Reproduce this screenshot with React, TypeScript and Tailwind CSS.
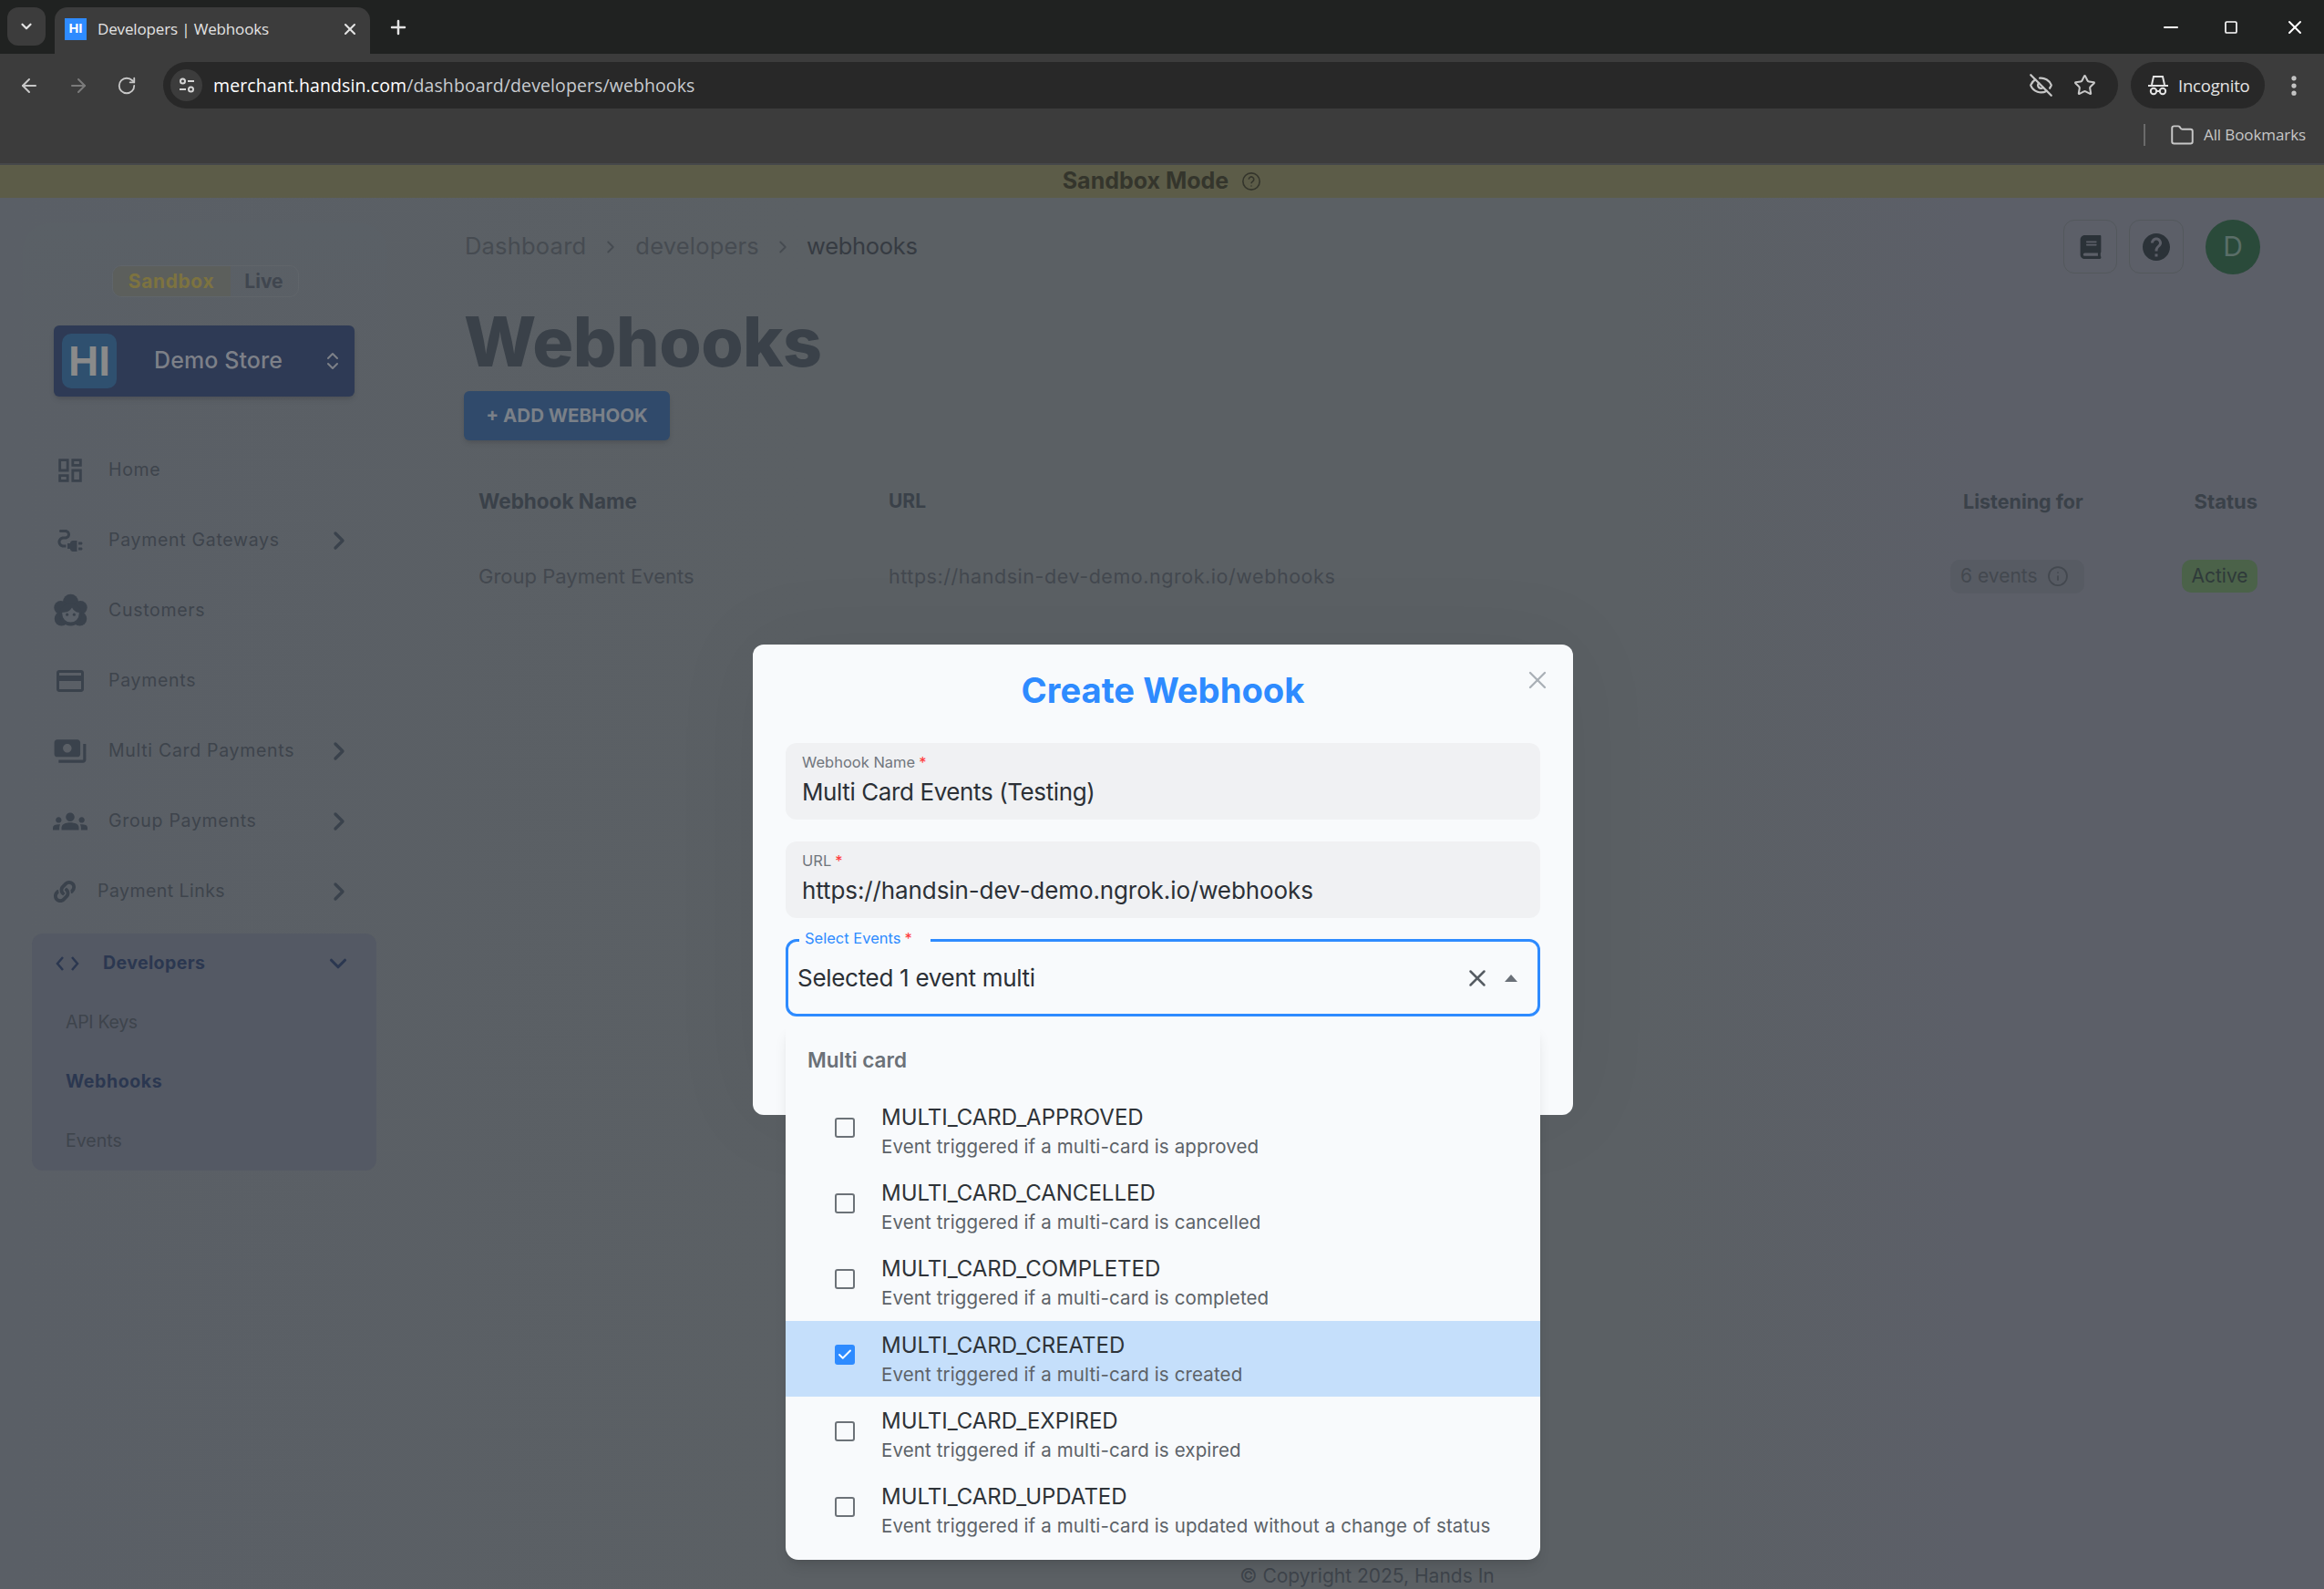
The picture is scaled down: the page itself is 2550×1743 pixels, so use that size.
import { ArrowLeft, ArrowRight, Check, ChevronDown, ChevronRight, ChevronsUpDown, EllipsisVertical, EyeOff, Folder, Info, Minus, Plus, RotateCw, Square, Star, X } from "lucide-react"
import { FaBook, FaLink } from "react-icons/fa"
import { MdElectricalServices, MdGroups, MdHelp, MdOutlineCreditCard, MdOutlineDashboard, MdPayments } from "react-icons/md"

function CustomerFace({ size, className }: { size: number; className?: string }) {
  return (
    <svg width={size} height={size} viewBox="0 0 24 24" className={className}>
      <g fill="currentColor">
        <circle cx="12" cy="6" r="5.5" />
        <circle cx="5" cy="10" r="4.8" />
        <circle cx="19" cy="10" r="4.8" />
        <circle cx="5.5" cy="18" r="5" />
        <circle cx="18.5" cy="18" r="5" />
        <circle cx="12" cy="15" r="8" />
      </g>
      <path d="M6 13.5c3 0 5.5-1 7-3.5 1 2 3 3.5 5 3.5v1a6 6 0 0 1-12 0z" fill="#5a6068" />
      <circle cx="9.5" cy="15" r="1" fill="currentColor" />
      <circle cx="14.5" cy="15" r="1" fill="currentColor" />
    </svg>
  )
}

const navigation = [
  { name: "Home", icon: MdOutlineDashboard, size: 34 },
  { name: "Payment Gateways", icon: MdElectricalServices, size: 36, arrow: true },
  { name: "Customers", icon: CustomerFace, size: 37 },
  { name: "Payments", icon: MdOutlineCreditCard, size: 36 },
  { name: "Multi Card Payments", icon: MdPayments, size: 38, arrow: true },
  { name: "Group Payments", icon: MdGroups, size: 38, arrow: true },
]

const events = [
  { name: "MULTI_CARD_APPROVED", desc: "Event triggered if a multi-card is approved" },
  { name: "MULTI_CARD_CANCELLED", desc: "Event triggered if a multi-card is cancelled" },
  { name: "MULTI_CARD_COMPLETED", desc: "Event triggered if a multi-card is completed" },
  { name: "MULTI_CARD_CREATED", desc: "Event triggered if a multi-card is created", selected: true },
  { name: "MULTI_CARD_EXPIRED", desc: "Event triggered if a multi-card is expired" },
  { name: "MULTI_CARD_UPDATED", desc: "Event triggered if a multi-card is updated without a change of status" },
]

function BrowserChrome() {
  return (
    <div className="font-['Open_Sans',sans-serif] text-[#e3e3e3]">
      {/* Tab strip */}
      <div className="h-[59px] bg-[#202221] flex items-end pl-[8px]">
        <div className="w-[42px] h-[42px] mb-[9px] rounded-[12px] bg-[#3c3c3c] flex items-center justify-center">
          <ChevronDown className="w-[18px] h-[18px]" strokeWidth={3} />
        </div>
        <div className="w-[346px] h-[51px] ml-[10px] rounded-t-[14px] bg-[#3c3c3c] flex items-center pl-[11px] pb-[4px]">
          <div className="w-[24px] h-[24px] bg-[#2e8bff] flex items-center justify-center text-white text-[15px] font-bold font-['Liberation_Sans',sans-serif]">HI</div>
          <span className="ml-[12px] text-[17px] tracking-[-0.15px] flex-1">Developers | Webhooks</span>
          <X className="w-[20px] h-[20px] mr-[12px]" strokeWidth={2.5} />
        </div>
        <Plus className="w-[24px] h-[24px] ml-[19px] mb-[17px]" strokeWidth={2.5} />
        <div className="flex-1" />
        <div className="flex items-center h-full text-white">
          <Minus className="w-[24px] h-[24px] mr-[46px]" strokeWidth={2} />
          <Square className="w-[16px] h-[18px] mr-[50px]" strokeWidth={2.5} />
          <X className="w-[24px] h-[24px] mr-[20px]" strokeWidth={2} />
        </div>
      </div>

      {/* Toolbar */}
      <div className="h-[122px] bg-[#3c3c3c] border-b-[2px] border-[#46484a]">
        <div className="h-[60px] pt-[9px] flex items-start">
          <div className="w-[179px] h-[51px] flex items-center pl-[20px] gap-[30px]">
            <ArrowLeft className="w-[24px] h-[24px] text-[#c7c7c7]" strokeWidth={2} />
            <ArrowRight className="w-[24px] h-[24px] text-[#7b7b7b]" strokeWidth={2} />
            <RotateCw className="w-[22px] h-[22px] text-[#c7c7c7]" strokeWidth={2} />
          </div>
          <div className="w-[2145px] h-[51px] rounded-full bg-[#282828] flex items-center pl-[8px] pr-[24px]">
            <div className="w-[35px] h-[35px] rounded-full bg-[#3c3c3c] flex items-center justify-center">
              <svg width="20" height="20" viewBox="0 0 20 20" fill="none" stroke="#d5d5d5" strokeWidth="2">
                <circle cx="5.5" cy="5" r="2.5" />
                <path d="M11 5h7M2 14h7" />
                <circle cx="14.5" cy="14" r="2.5" />
              </svg>
            </div>
            <span className="ml-[12px] text-[19.5px] tracking-[0.1px] text-[#c8ccd0] flex-1">
              <span className="text-white">merchant.handsin.com</span>/dashboard/developers/webhooks
            </span>
            <EyeOff className="w-[27px] h-[27px] text-[#c7c7c7] mr-[22px]" strokeWidth={2} />
            <Star className="w-[25px] h-[25px] text-[#c7c7c7]" strokeWidth={2} />
          </div>
          <div className="ml-[14px] w-[147px] h-[51px] rounded-full bg-[#282828] flex items-center pl-[18px]">
            <svg width="24" height="24" viewBox="0 0 24 24" fill="none" stroke="#e3e3e3" strokeWidth="2">
              <path d="M1 12h22M5 11l2-9h10l2 9" />
              <circle cx="7" cy="18" r="3.2" />
              <circle cx="17" cy="18" r="3.2" />
              <path d="M10 18h4" />
            </svg>
            <span className="ml-[10px] text-[18.5px] tracking-[-0.2px]">Incognito</span>
          </div>
          <div className="ml-[18px] h-[51px] flex items-center">
            <EllipsisVertical className="w-[28px] h-[28px] text-[#c7c7c7]" strokeWidth={2.5} />
          </div>
        </div>
        {/* Bookmarks */}
        <div className="h-[58px] flex items-center justify-end pr-[20px] text-[#c7c7c7]">
          <div className="w-[2px] h-[24px] bg-[#6a6a6a] mr-[27px]" />
          <Folder className="w-[27px] h-[27px] mr-[10px]" strokeWidth={1.75} />
          <span className="text-[17px] tracking-[-0.1px]">All Bookmarks</span>
        </div>
      </div>
    </div>
  )
}

function Sidebar() {
  return (
    <aside className="w-[450px] shrink-0 pl-[25px] text-[#3e444c]">
      <div className="w-[400px] mt-[28px] pt-[46px] rounded-t-[30px] bg-gradient-to-b from-[#5a6066] to-[#5a6066]/0">
        <div className="mx-auto w-[205px] h-[35px] flex rounded-[10px] border border-[#60656a] text-[21px] font-bold overflow-hidden">
          <div className="w-[129px] bg-[#5c5f5c] text-[#7d7340] flex items-center justify-center tracking-[0.6px]">Sandbox</div>
          <div className="flex-1 text-[#40464f] flex items-center justify-center">Live</div>
        </div>
        <div className="ml-[34px] mr-[36px] mt-[31px] h-[78px] rounded-[6px] bg-[#2e3a55] shadow-md flex items-center pl-[9px]">
          <div className="w-[60px] h-[60px] rounded-[10px] bg-[#2f506f] text-[#8a8a8a] text-[46px] font-black flex items-center justify-center font-['Liberation_Sans',sans-serif]">HI</div>
          <span className="ml-[41px] text-[25px] font-medium text-[#7d8088] tracking-[0.1px]">Demo Store</span>
          <ChevronsUpDown className="w-[24px] h-[28px] ml-[43px] text-[#7d8088]" strokeWidth={2} />
        </div>
      </div>

      <nav className="mt-[42px]">
        {navigation.map((item) => (
          <div key={item.name} className="h-[77px] flex items-center">
            <div className="w-[94px] flex justify-center pl-[10px]">
              <item.icon size={item.size} className="text-[#3a424c]" />
            </div>
            <span className="text-[19.5px] tracking-[0.7px]">{item.name}</span>
            {item.arrow && <ChevronRight className="w-[32px] h-[32px] ml-auto mr-[62px] text-[#3a424c]" strokeWidth={2.5} />}
          </div>
        ))}
        <div className="h-[77px] flex items-center">
          <div className="w-[82px] flex justify-start pl-[34px]">
            <FaLink size={24} className="text-[#3a424c]" />
          </div>
          <span className="text-[19.5px] tracking-[0.45px]">Payment Links</span>
          <ChevronRight className="w-[32px] h-[32px] ml-auto mr-[62px] text-[#3a424c]" strokeWidth={2.5} />
        </div>
      </nav>

      {/* Developers group */}
      <div className="ml-[10px] w-[378px] h-[260px] mt-[8px] rounded-[12px] bg-[#545964]">
        <div className="h-[65px] flex items-center pl-[26px]">
          <svg width="26" height="18" viewBox="0 0 26 18" fill="none" stroke="#2b3750" strokeWidth="2.5">
            <path d="M8 2 2 9l6 7M18 2l6 7-6 7" />
          </svg>
          <span className="ml-[26px] text-[19.5px] font-bold tracking-[0.4px] text-[#2b3750]">Developers</span>
          <ChevronDown className="w-[30px] h-[30px] ml-auto mr-[27px] text-[#2b3750]" strokeWidth={2.5} />
        </div>
        <div className="h-[65px] flex items-center pl-[37px] text-[19.5px] tracking-[-0.3px]">API Keys</div>
        <div className="h-[65px] flex items-center pl-[37px] text-[19.5px] font-bold tracking-[0.6px] text-[#2b3750]">Webhooks</div>
        <div className="h-[65px] flex items-center pl-[37px] text-[19.5px]">Events</div>
      </div>
    </aside>
  )
}

function MainContent() {
  return (
    <main className="flex-1 flex flex-col pl-[59px] pr-[73px] text-[#3a4149]">
      <div className="mt-[24px] h-[59px] flex items-center">
        <div className="flex items-center text-[25.5px] text-[#464b51] flex-1 tracking-[0.2px] pl-[1px]">
          <span>Dashboard</span>
          <ChevronRight className="w-[22px] h-[22px] mx-[16px]" strokeWidth={2} />
          <span>developers</span>
          <ChevronRight className="w-[22px] h-[22px] mx-[15px]" strokeWidth={2} />
          <span className="text-[#363b42] tracking-[-0.3px]">webhooks</span>
        </div>
        <div className="w-[59px] h-[59px] rounded-[12px] border border-[#53585c] flex items-center justify-center -mr-[3px]">
          <FaBook size={26} className="text-[#2b3238]" />
        </div>
        <div className="w-[60px] h-[59px] ml-[16px] rounded-[12px] border border-[#53585c] flex items-center justify-center -mr-[3px]">
          <MdHelp size={36} className="text-[#2b3238]" />
        </div>
        <div className="w-[60px] h-[60px] ml-[27px] -mr-[3px] rounded-full bg-[#2a4a3a] text-[#5a6e68] text-[30px] flex items-center justify-center">D</div>
      </div>

      <h1 className="mt-[35px] text-[75px] leading-[80px] font-extrabold tracking-[-0.5px]">Webhooks</h1>

      <div className="mt-[14px] w-[226px] h-[54px] rounded-[6px] bg-[#304a6b] shadow-md flex items-center justify-center text-[20.5px] font-bold text-[#7a8088]">
        + ADD WEBHOOK
      </div>

      <div className="mt-[36px] flex items-center h-[62px] pl-[16px] text-[21px] font-bold">
        <div className="w-[450px] text-[22.5px]">Webhook Name</div>
        <div className="flex-1">URL</div>
        <div className="w-[253px] text-[21.5px]">Listening for</div>
        <div className="w-[70px] text-right text-[22px]">Status</div>
      </div>
      <div className="mt-[30px] flex items-center h-[42px] pl-[16px] text-[22px] text-[#43484f]">
        <div className="w-[450px]">Group Payment Events</div>
        <div className="flex-1 text-[21.5px] tracking-[0.55px]">https://handsin-dev-demo.ngrok.io/webhooks</div>
        <div className="w-[253px]">
          <span className="inline-flex items-center h-[37px] w-[147px] -ml-[14px] pl-[11px] rounded-[10px] bg-[#575b63] text-[21px]">
            6 events
            <Info className="w-[24px] h-[24px] ml-[10px]" strokeWidth={1.75} />
          </span>
        </div>
        <div className="w-[70px] flex justify-end">
          <span className="shrink-0 h-[36px] w-[83px] rounded-[10px] bg-[#4b6249] text-[#2f3a3a] text-[21px] flex items-center justify-center">Active</span>
        </div>
      </div>

      <div className="mt-auto mb-[-1px] pl-[14px] text-center text-[21px] text-[#3e444b]">© Copyright 2025, Hands In</div>
    </main>
  )
}

function Field({ label, value, className, valueClassName }: { label: string; value: string; className?: string; valueClassName?: string }) {
  return (
    <div className={`h-[84px] rounded-[12px] bg-[#f0f1f3] px-[18px] pt-[11px] ${className ?? ""}`}>
      <div className="text-[16.5px] leading-[20px] text-[#70767d]">
        {label}<span className="text-[#ff3b3b] ml-[4px]">*</span>
      </div>
      <div className={`mt-[8px] text-[26px] leading-[30px] text-[#2b3036] ${valueClassName ?? ""}`}>{value}</div>
    </div>
  )
}

function CreateWebhookDialog() {
  return (
    <div className="absolute left-[826px] top-[707px] w-[900px] h-[516px] rounded-[12px] bg-[#f8fafc] shadow-[0_0_100px_rgba(0,0,0,0.06)] px-[36px] pt-[25px] font-[Inter,sans-serif]">
      <X className="absolute right-[23px] top-[23px] w-[32px] h-[32px] text-[#a9b0b7]" strokeWidth={1.75} />
      <h2 className="text-center text-[38.2px] leading-[50px] font-bold text-[#2e8bff]">Create Webhook</h2>
      <Field className="mt-[33px]" label="Webhook Name" value="Multi Card Events (Testing)" valueClassName="tracking-[-0.4px]" />
      <Field className="mt-[24px]" label="URL" value="https://handsin-dev-demo.ngrok.io/webhooks" valueClassName="tracking-[-0.1px]" />

      {/* Select with its open list */}
      <div className="relative mt-[23px] h-[85px] rounded-[12px] border-[3px] border-[#2e8bff] flex items-center pl-[10px] pr-[22px]">
        <div className="absolute left-[12px] -top-[14px] bg-[#f8fafc] pl-[6px] pr-[20px] h-[22px] text-[16.5px] leading-[20px] text-[#2e8bff]">
          Select Events<span className="text-[#ff3b3b] ml-[4px]">*</span>
        </div>
        <span className="text-[26px] text-[#2b3036] flex-1 tracking-[-0.3px]">Selected 1 event multi</span>
        <X className="w-[30px] h-[30px] text-[#565c63] mr-[15px]" strokeWidth={2} />
        <div className="w-0 h-0 border-x-[7px] border-x-transparent border-b-[8px] border-b-[#6a7078]" />

        <div className="absolute -left-[3px] -right-[3px] top-[92px] h-[586px] rounded-b-[14px] rounded-t-[4px] bg-[#f8fafc] shadow-lg">
          <div className="h-[76px] flex items-center pl-[24px] text-[22.5px] font-semibold text-[#6b7178]">Multi card</div>
          <div className="-mt-[2px]">
            {events.map((ev) => (
              <div key={ev.name} className={`h-[83.2px] flex ${ev.selected ? "bg-[#c5dffb]" : ""}`}>
                <div className={`w-[105px] pl-[54px] shrink-0 ${ev.selected ? "pt-[26px]" : "pt-[27px]"}`}>
                  {ev.selected ? (
                    <div className="w-[22px] h-[22px] rounded-[3px] bg-[#2e8bff] flex items-center justify-center">
                      <Check className="w-[18px] h-[18px] text-white" strokeWidth={2.5} />
                    </div>
                  ) : (
                    <div className="w-[22px] h-[22px] rounded-[3px] border-[2.5px] border-[#6c7278]" />
                  )}
                </div>
                <div className="pt-[11px]">
                  <div className="text-[24px] leading-[32px] text-[#2e3338]">{ev.name}</div>
                  <div className="text-[20.5px] leading-[31px] tracking-[0.13px] text-[#5c6268]">{ev.desc}</div>
                </div>
              </div>
            ))}
          </div>
        </div>
      </div>
    </div>
  )
}

export default function App() {
  return (
    <div className="relative h-[1743px] w-[2550px] overflow-hidden flex flex-col bg-[#5b6065] font-[Inter,sans-serif]">
      <BrowserChrome />
      <div className="h-[36px] shrink-0 bg-[#5c5c48] flex items-center justify-center gap-[14px] text-[25px] font-bold text-[#34352c]">
        Sandbox Mode
        <svg width="22" height="22" viewBox="0 0 24 24" fill="none" stroke="#34352c" strokeWidth="1.75">
          <circle cx="12" cy="12" r="10" />
          <path d="M9 9.5a3 3 0 1 1 4.5 2.6c-1 .6-1.5 1.2-1.5 2.4M12 17v1" />
        </svg>
      </div>
      <div className="flex-1 flex min-h-0 bg-[linear-gradient(90deg,#5a5f66_0%,#5b6064_35%,#5b6064_70%,#5c5f68_85%)]">
        <Sidebar />
        <MainContent />
      </div>
      <CreateWebhookDialog />
    </div>
  )
}
